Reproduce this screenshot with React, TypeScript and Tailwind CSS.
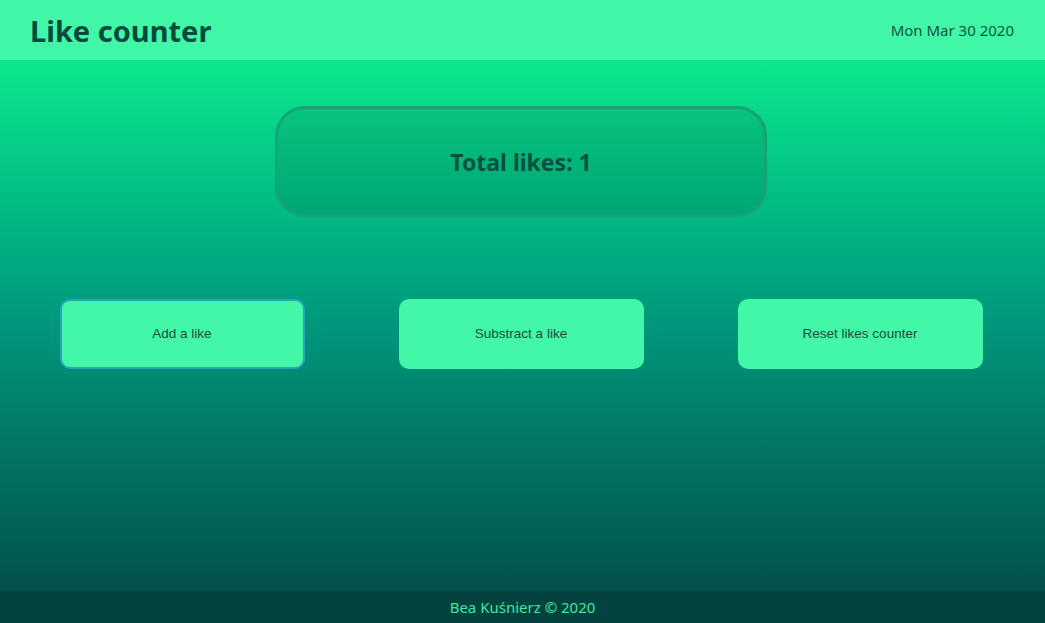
import { useState } from 'react'

const font = { fontFamily: '"Noto Sans", "Open Sans", sans-serif' }

export default function App() {
  const [likes, setLikes] = useState(1)

  const buttons = [
    { label: 'Add a like', onClick: () => setLikes(likes + 1), focused: true },
    { label: 'Substract a like', onClick: () => setLikes(likes - 1), focused: false },
    { label: 'Reset likes counter', onClick: () => setLikes(0), focused: false },
  ]

  return (
    <div className="flex h-[623px] w-full flex-col" style={font}>
      <header className="flex h-[60px] shrink-0 items-center justify-between bg-[#41f7a7] pl-[30px] pr-[31px]">
        <h1 className="text-[29px] font-bold leading-none text-[#064a3d]">Like counter</h1>
        <p className="text-[15px] text-[#0f5540]">Mon Mar 30 2020</p>
      </header>

      <main className="flex flex-1 flex-col items-center bg-gradient-to-b from-[#0ce88b] via-[#00977c] to-[#02524b] pr-[3px]">
        <div className="mt-[46px] flex h-[111px] w-[492px] items-center justify-center rounded-[30px] border-[3px] border-[#16a376] bg-gradient-to-b from-[#08c47d] to-[#00a676] pt-[2px]">
          <h2 className="text-[23px] font-bold text-[#06503f]">Total likes: {likes}</h2>
        </div>

        <div className="mt-[82px] flex gap-[94px]">
          {buttons.map(({ label, onClick, focused }) => (
            <button
              key={label}
              onClick={onClick}
              className={`h-[70px] w-[245px] rounded-[10px] bg-[#42f7a8] text-[13.5px] text-[#1d4c3c] ${
                focused ? 'border-2 border-[#2fa3bd]' : ''
              }`}
              style={{ fontFamily: '"Liberation Sans", Arial, sans-serif' }}
            >
              {label}
            </button>
          ))}
        </div>
      </main>

      <footer className="flex h-[32px] shrink-0 items-center justify-center bg-[#03433f]">
        <p className="text-[15px] text-[#3ee8a0]">Bea Kuśnierz © 2020</p>
      </footer>
    </div>
  )
}
